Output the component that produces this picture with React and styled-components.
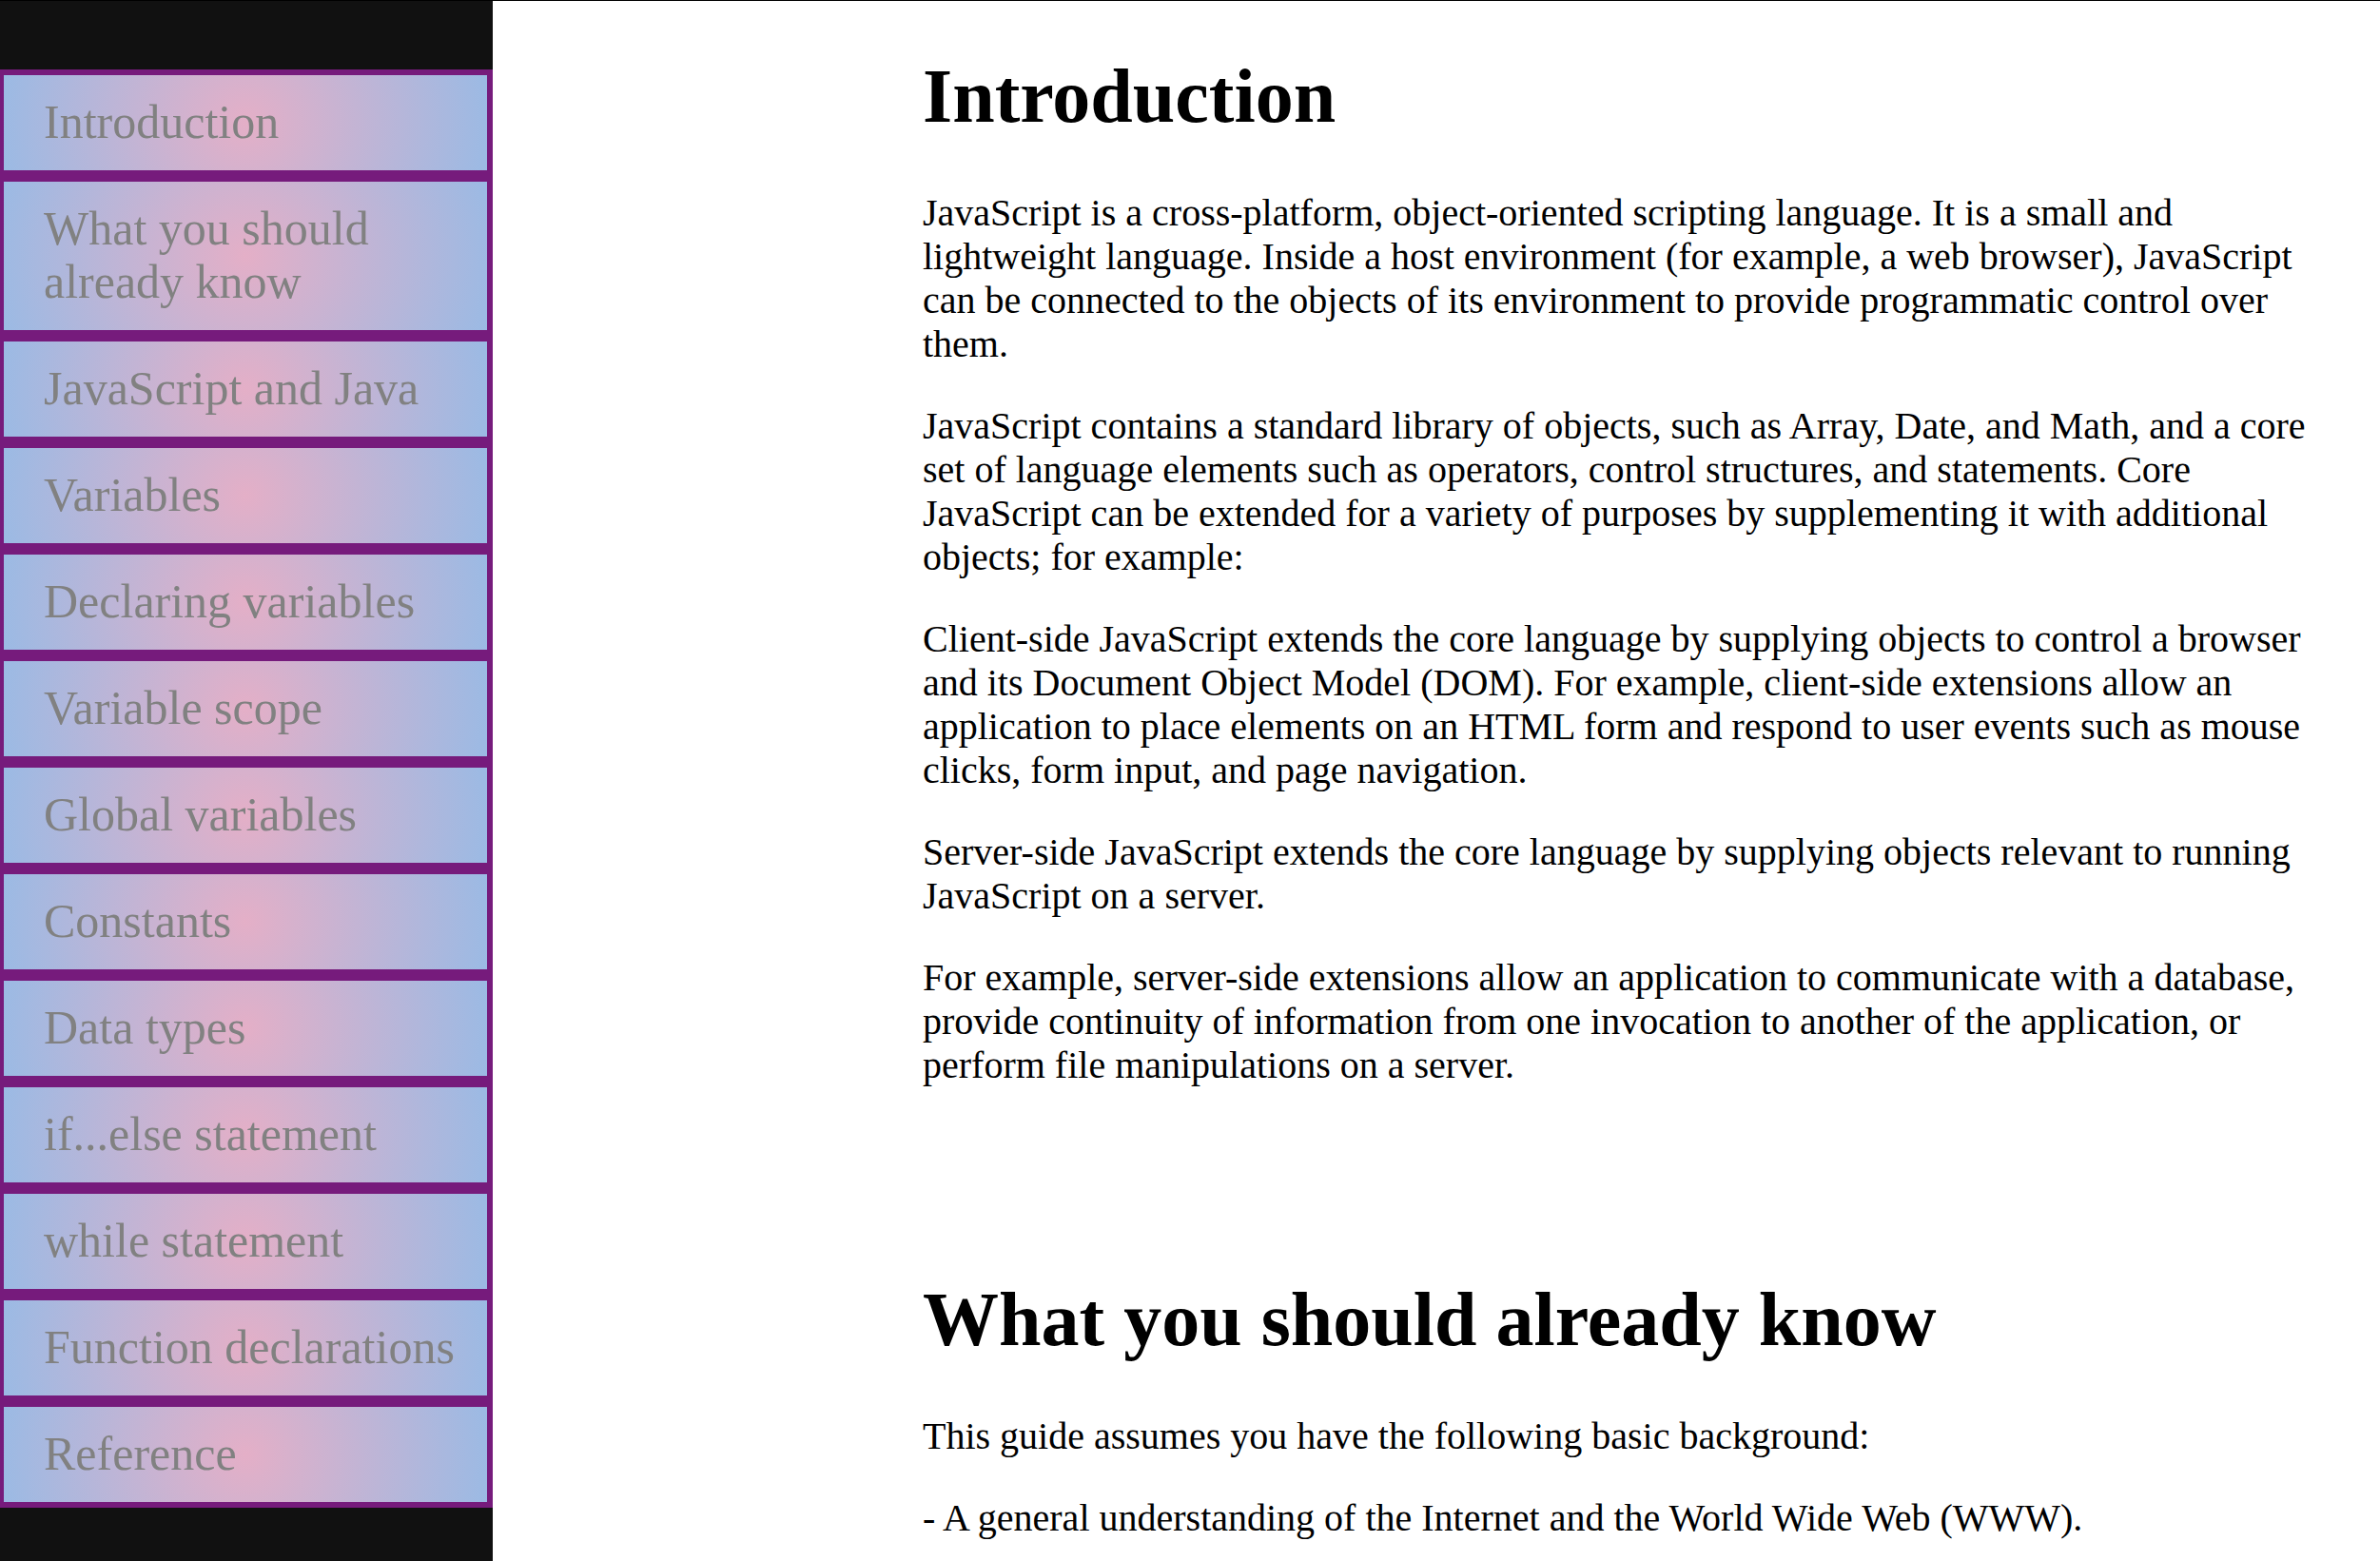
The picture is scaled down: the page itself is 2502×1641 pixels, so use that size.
import React from "react";
import styled, { createGlobalStyle } from "styled-components";

const GlobalStyle = createGlobalStyle`
  *, *::before, *::after {
    box-sizing: border-box;
  }

  body {
    margin: 0;
    background: #ffffff;
    color: #000000;
    font-family: "Liberation Serif", "Times New Roman", serif;
  }
`;

const Page = styled.div`
  display: flex;
  min-height: 100vh;
  border-top: 1px solid #000000;
`;

const Sidebar = styled.nav`
  flex: 0 0 518px;
  padding-top: 72px;
  background: #111111;
`;

const NavList = styled.ul`
  margin: 0;
  padding: 0;
  list-style: none;
`;

const NavLink = styled.a`
  display: block;
  padding: 21px 16px 23px 42px;
  border: 6px solid #761b7c;
  border-left-width: 4px;
  background: radial-gradient(circle, #e4afc7 0%, #9bbae4 100%) padding-box;
  color: #818181;
  font-size: 50px;
  line-height: 56px;
  text-decoration: none;

  &:hover {
    color: #f1f1f1;
  }
`;

const Main = styled.main`
  flex: 1;
  min-width: 0;
  padding: 54px 50px 0 452px;
`;

const Section = styled.section`
  & + & {
    margin-top: 198px;
  }
`;

const Heading = styled.h1`
  margin: 0 0 54px;
  font-size: 80px;
  font-weight: bold;
  line-height: 92px;
`;

const Paragraph = styled.p`
  margin: 0;
  font-size: 40px;
  line-height: 46px;

  & + & {
    margin-top: 40px;
  }
`;

const navItems = [
  "Introduction",
  "What you should already know",
  "JavaScript and Java",
  "Variables",
  "Declaring variables",
  "Variable scope",
  "Global variables",
  "Constants",
  "Data types",
  "if...else statement",
  "while statement",
  "Function declarations",
  "Reference",
];

const sections = [
  {
    title: "Introduction",
    paragraphs: [
      "JavaScript is a cross-platform, object-oriented scripting language. It is a small and lightweight language. Inside a host environment (for example, a web browser), JavaScript can be connected to the objects of its environment to provide programmatic control over them.",
      "JavaScript contains a standard library of objects, such as Array, Date, and Math, and a core set of language elements such as operators, control structures, and statements. Core JavaScript can be extended for a variety of purposes by supplementing it with additional objects; for example:",
      "Client-side JavaScript extends the core language by supplying objects to control a browser and its Document Object Model (DOM). For example, client-side extensions allow an application to place elements on an HTML form and respond to user events such as mouse clicks, form input, and page navigation.",
      "Server-side JavaScript extends the core language by supplying objects relevant to running JavaScript on a server.",
      "For example, server-side extensions allow an application to communicate with a database, provide continuity of information from one invocation to another of the application, or perform file manipulations on a server.",
    ],
  },
  {
    title: "What you should already know",
    paragraphs: [
      "This guide assumes you have the following basic background:",
      "- A general understanding of the Internet and the World Wide Web (WWW).",
    ],
  },
];

const toId = (title) => title.replace(/\s+/g, "_");

export default function App() {
  return (
    <>
      <GlobalStyle />
      <Page>
        <Sidebar aria-label="Documentation">
          <NavList>
            {navItems.map((item) => (
              <li key={item}>
                <NavLink href={`#${toId(item)}`}>{item}</NavLink>
              </li>
            ))}
          </NavList>
        </Sidebar>
        <Main>
          {sections.map(({ title, paragraphs }) => (
            <Section key={title} id={toId(title)}>
              <Heading>{title}</Heading>
              {paragraphs.map((text) => (
                <Paragraph key={text}>{text}</Paragraph>
              ))}
            </Section>
          ))}
        </Main>
      </Page>
    </>
  );
}
